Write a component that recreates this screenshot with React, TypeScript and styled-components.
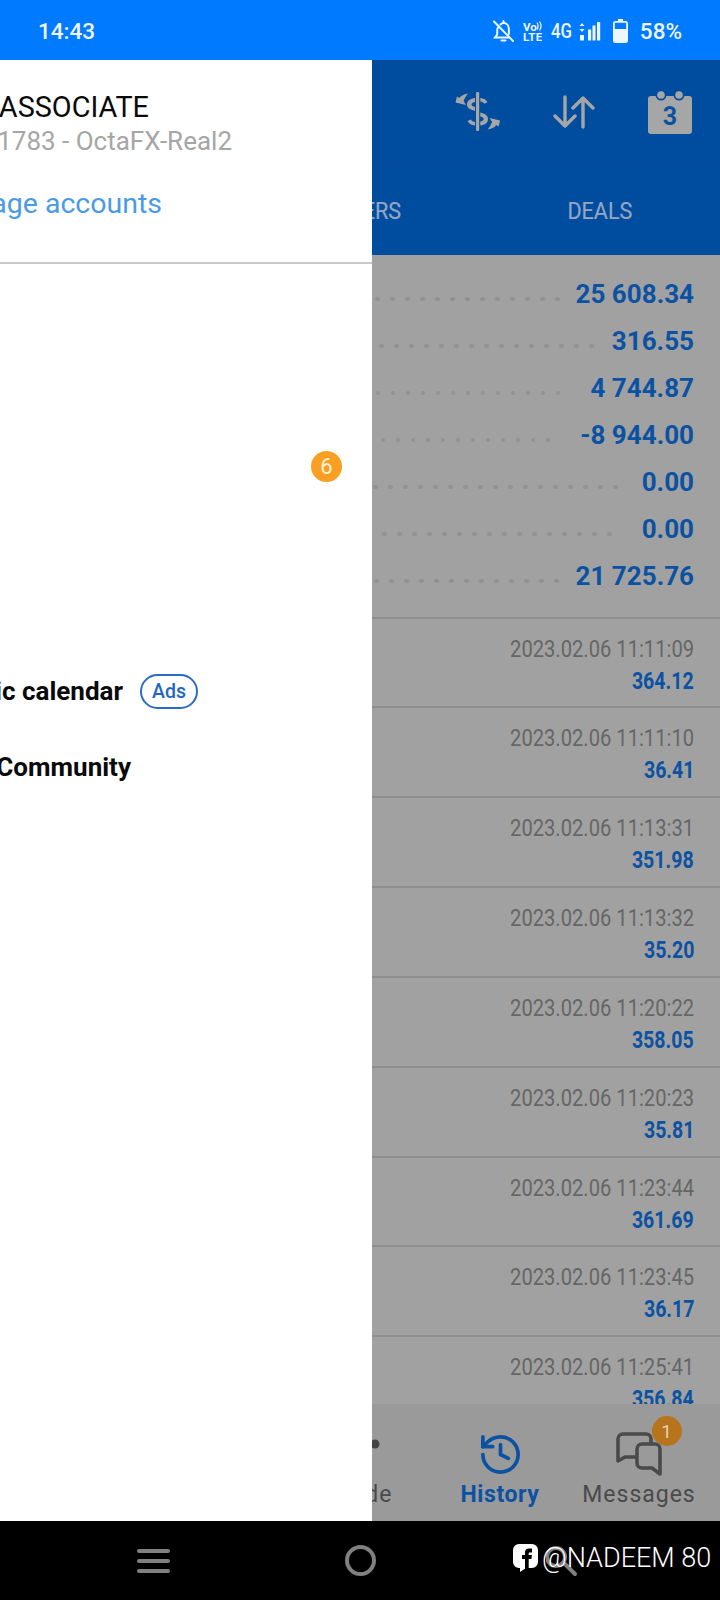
import React from 'react';
import styled, { createGlobalStyle } from 'styled-components';
import { History } from 'lucide-react';

const Global = createGlobalStyle`
  html, body { margin: 0; padding: 0; background: #000; }
  * { box-sizing: border-box; }
  body { font-family: Roboto, "Noto Sans", "Liberation Sans", sans-serif; }
`;

const Screen = styled.div`
  width: 720px; height: 1600px; display: flex; flex-direction: column;
  overflow: hidden; position: relative; background: #000;
`;

const StatusBar = styled.div`
  height: 60px; flex: none; background: #007aff; color: #eef6ff;
  display: flex; align-items: center; padding: 2px 38px 0 38px;
`;
const Clock = styled.span`
  font-size: 22.5px; font-weight: 500; margin-right: auto;
`;
const StatusIcons = styled.div`
  display: flex; align-items: center; gap: 9px;
`;
const FourG = styled.span`
  font-size: 21px; font-weight: 500; display: inline-block; width: 19px;
  transform: scaleX(.8); transform-origin: left center; white-space: nowrap;
`;
const BatterySlot = styled.span`
  display: flex; margin: 0 3px;
`;
const Percent = styled.span`
  font-size: 22.5px; font-weight: 500;
`;

const Workspace = styled.div`
  flex: 1; position: relative; display: flex; min-height: 0;
`;

const Main = styled.div`
  width: 720px; display: flex; flex-direction: column; background: #a1a1a1;
`;
const Header = styled.header`
  flex: none; background: #004d9f;
`;
const Toolbar = styled.div`
  height: 104px; display: flex; align-items: center; justify-content: flex-end;
  border-bottom: 1px solid #084793; padding: 0 28px 0 0;
`;
const ToolButton = styled.span<{ $gap: number }>`
  display: flex; margin-left: ${p => p.$gap}px;
`;
const Tabs = styled.div`
  height: 91px; display: grid; grid-template-columns: repeat(3, 1fr); align-items: center;
  justify-items: center; padding: 2px 0 0 2px;
`;
const TabLabel = styled.span`
  font-size: 24.5px; color: #94a6c4; display: inline-block; transform: scaleX(.88);
  -webkit-text-stroke: .2px #94a6c4;
`;

const Summary = styled.section`
  flex: none; padding: 15.5px 26px 17px 0;
`;
const SummaryRow = styled.div`
  height: 47px; display: flex; justify-content: flex-end; align-items: center;
`;
const Leader = styled.span<{ $space: number }>`
  display: flex; gap: 10.5px; margin-right: ${p => p.$space}px; align-self: flex-start; margin-top: 26px;
`;
const LeaderDot = styled.i`
  display: block; width: 4.5px; height: 4.5px; border-radius: 50%; background: #929292;
`;
const SummaryValue = styled.span`
  font-size: 26px; font-weight: 700; color: #0c52a2; white-space: nowrap;
`;

const DealList = styled.section`
  flex: 1; min-height: 0; overflow: hidden; border-top: 2px solid #8e8e8e;
`;
const DealRow = styled.div`
  height: 89.85px; border-bottom: 2px solid #8e8e8e; padding: 15px 26px 0 0;
  display: flex; flex-direction: column; align-items: flex-end;
`;
const DealTime = styled.span`
  font-size: 24px; line-height: 30px; color: #666; display: inline-block; white-space: nowrap;
  transform: scaleX(.84); transform-origin: right center;
`;
const DealAmount = styled.span`
  font-size: 23px; line-height: 35px; font-weight: 700; color: #0c52a2; display: inline-block;
  transform: scaleX(.85); transform-origin: right center;
`;

const BottomTabs = styled.nav`
  height: 117px; flex: none; background: #9a9a9a; display: grid;
  grid-template-columns: repeat(3, 139px); justify-content: end; padding-right: 11.5px;
`;
const BottomTab = styled.div<{ $active?: boolean }>`
  position: relative; display: flex; flex-direction: column; align-items: center;
  padding-top: 25px; color: ${p => (p.$active ? '#0c52a2' : '#4a4a4a')};
`;
const IconSlot = styled.div`
  height: 50px; margin-bottom: 1px; display: flex; align-items: center; justify-content: center;
`;
const BottomLabel = styled.span<{ $active?: boolean }>`
  font-size: 23px; line-height: 30px; white-space: nowrap;
  font-weight: ${p => (p.$active ? 700 : 400)};
  letter-spacing: ${p => (p.$active ? '.6px' : '1px')};
`;
const CountBadge = styled.span`
  position: absolute; left: 82px; top: 12px; width: 30px; height: 30px; border-radius: 50%;
  background: #b8741c; color: #e2cfb0; font-size: 19px; display: flex; align-items: center; justify-content: center;
`;

const Drawer = styled.aside`
  position: absolute; left: 0; top: 0; bottom: 0; width: 372px; background: #fff;
  display: flex; flex-direction: column;
`;
const Clip = styled.div<{ $right: number }>`
  width: ${p => p.$right}px; display: flex; justify-content: flex-end; white-space: nowrap;
`;
const AccountName = styled(Clip)`
  margin-top: 30px; font-size: 28.8px; line-height: 34px; color: #0a0a0a;
`;
const AccountLine = styled(Clip)`
  font-size: 26px; line-height: 34px; color: #a6a6a6;
`;
const ManageLink = styled(Clip)`
  margin-top: 29px; font-size: 28.5px; line-height: 34px; color: #4a9be6;
`;
const DrawerRule = styled.hr`
  margin: 41px 0 0; border: 0; height: 2px; background: #c9c9c9; flex: none;
`;
const MenuRow = styled.div<{ $top: number }>`
  height: 76px; margin-top: ${p => p.$top}px; display: flex; align-items: center; gap: 17px; padding-right: 30px;
`;
const MenuLabel = styled(Clip)`
  font-size: 26px; font-weight: 700; color: #0a0a0a;
`;
const MailBadge = styled.span`
  margin-left: auto; width: 31px; height: 31px; border-radius: 50%; background: #f9a024; color: #fdf0d8;
  font-size: 22px; display: flex; align-items: center; justify-content: center;
`;
const AdsPill = styled.span`
  height: 35px; width: 58px; border: 2px solid #2a6cc4; border-radius: 18px; color: #1e66c8;
  font-size: 19.5px; font-weight: 500; display: flex; align-items: center; justify-content: center;
`;

const NavBar = styled.div`
  height: 79px; flex: none; background: #000; position: relative; display: flex; align-items: center;
  padding: 0 0 0 137px;
`;
const HomeRing = styled.span`
  width: 31px; height: 31px; border-radius: 50%; border: 4px solid #808080; margin-left: 174.5px;
`;
const MenuGlyph = styled.svg`display: block;`;
const SearchGlyph = styled.svg`
  display: block; margin-left: 170.5px;
`;
const Watermark = styled.div`
  position: absolute; left: 513px; top: 22px; display: flex; align-items: center; gap: 4px;
  color: #fff; font-size: 27px; font-weight: 300; white-space: nowrap; line-height: 30px;
`;

const dots = (n: number) => Array.from({ length: n }, (_, i) => <LeaderDot key={i} />);

const summary: [string, number, number][] = [
  ['25 608.34', 13, 16],
  ['316.55', 15, 18],
  ['4 744.87', 13, 30],
  ['-8 944.00', 12, 30],
  ['0.00', 17, 24],
  ['0.00', 16, 30],
  ['21 725.76', 13, 17],
];

const deals = [
  ['2023.02.06 11:11:09', '364.12'],
  ['2023.02.06 11:11:10', '36.41'],
  ['2023.02.06 11:13:31', '351.98'],
  ['2023.02.06 11:13:32', '35.20'],
  ['2023.02.06 11:20:22', '358.05'],
  ['2023.02.06 11:20:23', '35.81'],
  ['2023.02.06 11:23:44', '361.69'],
  ['2023.02.06 11:23:45', '36.17'],
  ['2023.02.06 11:25:41', '356.84'],
];

const BellOff = () => (
  <svg width="21" height="23" viewBox="0 0 21 23" fill="none" stroke="#eef6ff" strokeWidth="2" strokeLinecap="round">
    <path d="M1 1.5 20 21" />
    <path d="M5 7.5c-.6 1-.8 2-.8 3.2v4L2 17.5h13.5M7.5 4.5c1-1 2-1.4 3-1.4 3.4 0 5.4 2.6 5.4 6v5" />
    <path d="M10.5 1v2M8.5 20.5h4" />
  </svg>
);
const VoLte = () => (
  <svg width="19" height="20" viewBox="0 0 19 20">
    <text x="0" y="9.500" fontSize="11.500" fontWeight="700" fill="#eef6ff" fontFamily="Roboto">Vo</text>
    <path d="M14 1.500c1.200 2 1.200 5 0 7M16.500 0.500c1.800 2.700 1.800 6.300 0 9" stroke="#eef6ff" strokeWidth="1.300" fill="none" />
    <text x="0" y="19.500" fontSize="11.500" fontWeight="700" fill="#eef6ff" fontFamily="Roboto" letterSpacing=".4">LTE</text>
  </svg>
);
const Signal = () => (
  <svg width="22" height="20" viewBox="0 0 22 20" fill="#eef6ff">
    <path d="M3 2 5.500 5h-5zM3 11 .5 8h5z" />
    <rect x="1" y="14" width="4" height="5.500" />
    <rect x="9" y="8.500" width="3.200" height="11" />
    <rect x="18" y="1" width="3.200" height="18.500" />
    <rect x="13.500" y="4.500" width="3" height="15" />
  </svg>
);
const Battery = () => (
  <svg width="15" height="24" viewBox="0 0 15 24">
    <path d="M5 0h5v2H5z" fill="#eef6ff" />
    <rect x=".9" y="2.900" width="13.200" height="20.200" rx="1.600" fill="none" stroke="#eef6ff" strokeWidth="1.800" />
    <rect x="1" y="10" width="13" height="13" rx="1" fill="#eef6ff" />
  </svg>
);
const CurrencyIcon = () => (
  <svg width="46" height="40" viewBox="0 0 46 40" fill="#a6a6a6">
    <rect x="21" y="0" width="3.200" height="39" rx="1.200" />
    <path d="M20 6c-5 .6-8 3-8 6.600 0 3.500 3 5 8 6.400v-4c-2.300-.6-3.500-1.200-3.500-2.400 0-1.400 1.400-2.300 3.500-2.600z" />
    <path d="M25.300 6c3.500.3 6 1.800 7.200 4.200l-3.300 1.500c-.7-1.200-2-1.900-3.900-2.100z" />
    <path d="M25.300 20.500c4.700 1.200 7.700 3 7.700 6.400 0 3.700-3 6-7.700 6.500v-4c2.200-.3 3.400-1.300 3.400-2.500 0-1.300-1.200-1.900-3.400-2.500z" />
    <path d="M20 33.500c-3.700-.4-6.200-2-7.400-4.600l3.300-1.500c.7 1.400 2.100 2.200 4.100 2.400z" />
    <path d="M.5 10.500 11 13 8.500 9Q10 5 13 1.500 6 3 4.500 6L2 4.500z" />
    <path d="M.5 10.500 11 13 8.500 9Q10 5 13 1.500 6 3 4.500 6L2 4.500z" transform="rotate(180 22.800 19.500)" />
  </svg>
);
const SwapIcon = () => (
  <svg width="42" height="34" viewBox="0 0 42 34" fill="none" stroke="#a6a6a6" strokeWidth="3.400" strokeLinecap="round" strokeLinejoin="round">
    <path d="M12 2v29M2 21l10 10 10-10" />
    <path d="M30 32V3M20 13 30 3l10 10" />
  </svg>
);
const CalendarIcon = () => (
  <svg width="44" height="44" viewBox="0 0 44 44">
    <path d="M3 6h38a3 3 0 0 1 3 3v32a3 3 0 0 1-3 3H3a3 3 0 0 1-3-3V9a3 3 0 0 1 3-3z" fill="#a6a6a6" />
    <circle cx="13" cy="5" r="5.500" fill="#004d9f" />
    <circle cx="31" cy="5" r="5.500" fill="#004d9f" />
    <circle cx="13" cy="5" r="3.800" fill="#a6a6a6" />
    <circle cx="31" cy="5" r="3.800" fill="#a6a6a6" />
    <text x="22" y="35" textAnchor="middle" fontSize="25" fontWeight="700" fill="#0c52a2" fontFamily="Roboto">3</text>
  </svg>
);
const ChatIcon = () => (
  <svg width="46" height="44" viewBox="0 0 46 44" fill="none" stroke="#4a4a4a" strokeWidth="3.600" strokeLinejoin="round">
    <path d="M35 12V7a5 5 0 0 0-5-5H7a5 5 0 0 0-5 5v22l7-4h12" />
    <path d="M26 12h13a5 5 0 0 1 5 5v25l-8-6H26a5 5 0 0 1-5-5V17a5 5 0 0 1 5-5z" />
  </svg>
);
const TradeIcon = () => (
  <svg width="40" height="40" viewBox="0 0 40 40" fill="#444">
    <circle cx="34" cy="10" r="4.500" />
  </svg>
);
const FbIcon = () => (
  <svg width="25" height="28" viewBox="0 0 25 28">
    <path d="M6 0h13a6 6 0 0 1 6 6v12a6 6 0 0 1-6 6h-6l-6 4v-4H6a6 6 0 0 1-6-6V6a6 6 0 0 1 6-6z" fill="#fff" />
    <path d="M12 25V15H9v-4h3V8.500C12 6 13.500 4.500 16 4.500h3v4h-2c-1 0-1.300.4-1.300 1.300V11H19l-.6 4h-2.700v10z" fill="#000" />
  </svg>
);

export default function App() {
  return (
    <Screen>
      <Global />
      <StatusBar>
        <Clock>14:43</Clock>
        <StatusIcons>
          <BellOff />
          <VoLte />
          <FourG>4G</FourG>
          <Signal />
          <BatterySlot><Battery /></BatterySlot>
          <Percent>58%</Percent>
        </StatusIcons>
      </StatusBar>
      <Workspace>
        <Main>
          <Header>
            <Toolbar>
              <ToolButton $gap={0}><CurrencyIcon /></ToolButton>
              <ToolButton $gap={52}><SwapIcon /></ToolButton>
              <ToolButton $gap={53}><CalendarIcon /></ToolButton>
            </Toolbar>
            <Tabs>
              <TabLabel>POSITIONS</TabLabel>
              <TabLabel>ORDERS</TabLabel>
              <TabLabel>DEALS</TabLabel>
            </Tabs>
          </Header>
          <Summary>
            {summary.map(([value, n, space], i) => (
              <SummaryRow key={i}>
                <Leader $space={space}>{dots(n)}</Leader>
                <SummaryValue>{value}</SummaryValue>
              </SummaryRow>
            ))}
          </Summary>
          <DealList>
            {deals.map(([time, amount]) => (
              <DealRow key={time}>
                <DealTime>{time}</DealTime>
                <DealAmount>{amount}</DealAmount>
              </DealRow>
            ))}
          </DealList>
          <BottomTabs>
            <BottomTab>
              <IconSlot><TradeIcon /></IconSlot>
              <BottomLabel>Trade</BottomLabel>
            </BottomTab>
            <BottomTab $active>
              <IconSlot><History size={47} strokeWidth={1.9} /></IconSlot>
              <BottomLabel $active>History</BottomLabel>
            </BottomTab>
            <BottomTab>
              <IconSlot><ChatIcon /></IconSlot>
              <BottomLabel>Messages</BottomLabel>
              <CountBadge>1</CountBadge>
            </BottomTab>
          </BottomTabs>
        </Main>
        <Drawer>
          <AccountName $right={149}>ASSOCIATE</AccountName>
          <AccountLine $right={232}>1783 - OctaFX-Real2</AccountLine>
          <ManageLink $right={162}>Manage accounts</ManageLink>
          <DrawerRule />
          <MenuRow $top={164}>
            <MailBadge>6</MailBadge>
          </MenuRow>
          <MenuRow $top={149}>
            <MenuLabel $right={123}>Economic calendar</MenuLabel>
            <AdsPill>Ads</AdsPill>
          </MenuRow>
          <MenuRow $top={0}>
            <MenuLabel $right={131}>MQL5 Community</MenuLabel>
          </MenuRow>
        </Drawer>
      </Workspace>
      <NavBar>
        <MenuGlyph width="33" height="25" viewBox="0 0 33 25" fill="#808080">
          <rect x="0" y="1" width="33" height="4" rx="2" />
          <rect x="0" y="11" width="33" height="4" rx="2" />
          <rect x="0" y="21" width="33" height="4" rx="2" />
        </MenuGlyph>
        <HomeRing />
        <SearchGlyph width="32" height="34" viewBox="0 0 32 34" fill="none" stroke="#808080" strokeWidth="4" strokeLinecap="round">
          <circle cx="10" cy="13" r="9" />
          <path d="M19 20l10 10" />
        </SearchGlyph>
        <Watermark>
          <FbIcon />
          <span>@NADEEM 80</span>
        </Watermark>
      </NavBar>
    </Screen>
  );
}
